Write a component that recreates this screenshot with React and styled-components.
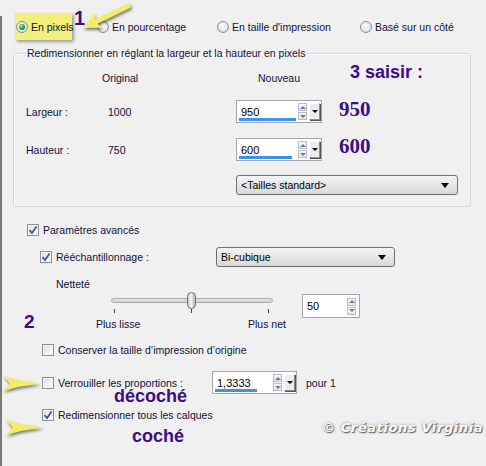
import React from 'react';
import styled, { createGlobalStyle } from 'styled-components';

const GlobalStyle = createGlobalStyle`
  body {
    margin: 0;
    background: #f0f0f0;
  }
`;

const Page = styled.div`
  position: relative;
  width: 486px;
  height: 466px;
  overflow: hidden;
  background: #f0f0f0;
  font-family: "Liberation Sans", Arial, sans-serif;
  font-size: 10.5px;
  color: #10103a;
  padding-top: 13px;
  box-sizing: border-box;
  white-space: nowrap;

  &::before {
    content: '';
    position: absolute;
    left: 0;
    top: 16px;
    bottom: 0;
    width: 2px;
    background: #7a7a7a;
  }
`;

const RadioRow = styled.div`
  display: flex;
  align-items: center;
  height: 27px;
  padding-left: 15px;
`;

const Highlight = styled.div`
  display: flex;
  align-items: center;
  gap: 3px;
  width: 57px;
  height: 27px;
  padding-left: 1px;
  box-sizing: border-box;
  background: #f3ef7c;
  box-shadow: 2px 2px 3px rgba(0, 0, 0, 0.35);
  margin-right: 25px;
`;

const RadioItem = styled.label`
  display: flex;
  align-items: center;
  gap: 3px;
  width: ${(p) => (p.$w ? `${p.$w}px` : 'auto')};
`;

const RadioDot = styled.span`
  width: 12px;
  height: 12px;
  border-radius: 50%;
  box-sizing: border-box;
  border: 1px solid #8a8f96;
  background: radial-gradient(circle at 45% 40%, #ffffff 0%, #e4e6e9 60%, #c9ccd1 100%);
  display: flex;
  align-items: center;
  justify-content: center;
  flex-shrink: 0;

  &::after {
    content: '';
    display: ${(p) => (p.$on ? 'block' : 'none')};
    width: 6px;
    height: 6px;
    border-radius: 50%;
    background: radial-gradient(circle at 40% 35%, #9ff0a8 0%, #1c9b3a 55%, #0b5a20 100%);
  }
`;

const Group = styled.fieldset`
  margin: 7px 0 0 13px;
  width: 458px;
  box-sizing: border-box;
  padding: 0 0 11px 12px;
  border: 1px solid #d6d9dc;
  border-radius: 3px;
  box-shadow: inset 1px 1px 0 #ffffff;
`;

const Legend = styled.legend`
  padding: 0 1px;
  line-height: 12px;
`;

const HeadRow = styled.div`
  display: grid;
  grid-template-columns: 82px 128px 86px;
  height: 16px;
  align-items: center;
  margin-top: 11px;
`;

const HeadCell = styled.span`
  grid-column: ${(p) => p.$col};
  text-align: ${(p) => (p.$center ? 'center' : 'left')};
  margin-left: ${(p) => (p.$shift ? `${p.$shift}px` : '0')};
`;

const Grid = styled.div`
  display: grid;
  grid-template-columns: 82px 128px 86px;
  grid-auto-rows: 23px;
  row-gap: 15px;
  align-items: center;
  margin-top: 14px;
`;

const SelectBox = styled.div`
  display: flex;
  align-items: center;
  justify-content: space-between;
  width: ${(p) => p.$w}px;
  height: 20px;
  box-sizing: border-box;
  padding: 0 8px 0 4px;
  border: 1px solid #707070;
  border-radius: 3px;
  background: linear-gradient(#f4f4f4, #e6e6e6 50%, #d8d8d8);
  color: #000;
  margin-left: ${(p) => (p.$ml ? `${p.$ml}px` : '0')};
  margin-top: ${(p) => (p.$mt ? `${p.$mt}px` : '0')};
`;

const Caret = styled.span`
  width: 0;
  height: 0;
  border-left: 4px solid transparent;
  border-right: 4px solid transparent;
  border-top: 5px solid #000;
`;

const SpinOuter = styled.div`
  display: flex;
  align-items: center;
  width: ${(p) => p.$w}px;
  height: ${(p) => p.$h || 23}px;
  box-sizing: border-box;
  border: 1px solid #a3a6ab;
  background: #fff;
  padding-right: 1px;
  color: #000;
  flex-shrink: 0;
`;

const SpinValue = styled.span`
  position: relative;
  flex: 1;
  align-self: stretch;
  display: flex;
  align-items: center;
  padding-left: 4px;
  font-size: 11px;

  &::after {
    content: '';
    display: ${(p) => (p.$bar ? 'block' : 'none')};
    position: absolute;
    left: 2px;
    bottom: 1px;
    width: ${(p) => p.$bar}px;
    height: 3px;
    background: #3b93ea;
  }
`;

const SpinArrows = styled.span`
  display: flex;
  flex-direction: column;
  gap: 1px;
  margin-right: 2px;
`;

const SpinBtn = styled.span`
  width: 9px;
  height: 8px;
  box-sizing: border-box;
  border: 1px solid #b9bcc2;
  background: linear-gradient(#fafafa, #e3e5e8);
  display: flex;
  align-items: center;
  justify-content: center;

  &::after {
    content: '';
    border-left: 3px solid transparent;
    border-right: 3px solid transparent;
    ${(p) => (p.$down ? 'border-top: 3px solid #5d7fbf;' : 'border-bottom: 3px solid #5d7fbf;')}
  }
`;

const DropBtn = styled.span`
  width: 11px;
  height: 17px;
  box-sizing: border-box;
  border: 1px solid #8c8c8c;
  border-top-color: #fff;
  border-left-color: #fff;
  box-shadow: 1px 1px 0 #555;
  background: #ececec;
  display: flex;
  align-items: center;
  justify-content: center;

  &::after {
    content: '';
    border-left: 3px solid transparent;
    border-right: 3px solid transparent;
    border-top: 3px solid #000;
  }
`;

const Lower = styled.div`
  display: flex;
  flex-direction: column;
`;

const Row = styled.div`
  display: flex;
  align-items: center;
  padding-left: ${(p) => p.$pl}px;
  margin-top: ${(p) => p.$mt}px;
  height: ${(p) => p.$h || 13}px;
`;

const CheckLabel = styled.label`
  display: flex;
  align-items: center;
  gap: 4px;
  width: ${(p) => (p.$w ? `${p.$w}px` : 'auto')};
  flex-shrink: 0;
`;

const Box = styled.span`
  width: 12px;
  height: 12px;
  box-sizing: border-box;
  border: 1px solid #8e8f91;
  background: linear-gradient(135deg, #d9dadc, #f6f6f6 70%);
  box-shadow: inset 0 0 0 1px #f4f4f4;
  display: flex;
  align-items: center;
  justify-content: center;
  flex-shrink: 0;
`;

const SliderRow = styled.div`
  display: flex;
  align-items: flex-start;
  margin-top: 2px;
  padding-left: 96px;
`;

const SliderBlock = styled.div`
  position: relative;
  width: 194px;
  height: 38px;
`;

const SpinSlot = styled.div`
  margin: 2px 0 0 12px;
`;

const Track = styled.div`
  position: absolute;
  left: 15px;
  top: 6px;
  width: 162px;
  height: 5px;
  box-sizing: border-box;
  border: 1px solid #a9a9a9;
  border-radius: 3px;
  background: linear-gradient(#e7e7e7, #cfcfcf);
`;

const Thumb = styled.div`
  position: absolute;
  left: 91px;
  top: 0;
  width: 9px;
  height: 17px;
  box-sizing: border-box;
  border: 1px solid #6f7277;
  border-radius: 5px;
  background: linear-gradient(90deg, #c9ccd3, #f4f5f7 45%, #aab0bb);
`;

const Tick = styled.span`
  position: absolute;
  top: 17px;
  left: ${(p) => p.$x}px;
  width: 1px;
  height: 4px;
  background: #444;
`;

const TickLabel = styled.span`
  position: absolute;
  top: 26px;
  left: ${(p) => p.$x}px;
  line-height: 13px;
`;

const Trail = styled.span`
  margin-left: 9px;
`;

const Note = styled.span`
  position: absolute;
  left: ${(p) => p.$x}px;
  top: ${(p) => p.$y}px;
  color: #3d0c86;
  font-family: ${(p) => (p.$serif ? '"Liberation Serif", "Times New Roman", serif' : '"Liberation Sans", Arial, sans-serif')};
  font-weight: bold;
  font-size: ${(p) => p.$size}px;
  line-height: 1;
`;

const Watermark = styled.span`
  position: absolute;
  left: 322px;
  top: 420px;
  color: #fafafa;
  font-family: "DejaVu Sans", sans-serif;
  font-weight: bold;
  font-style: italic;
  font-size: 13px;
  letter-spacing: 0.6px;
  text-shadow: 1px 1px 1px #606060, 0 0 3px #8a8a8a;
`;

const ArrowSvg = styled.svg`
  position: absolute;
  left: ${(p) => p.$x}px;
  top: ${(p) => p.$y}px;
  overflow: visible;
  filter: drop-shadow(1px 2px 1.5px rgba(0, 0, 0, 0.5));
`;

const Radio = ({ on, children, w }) => (
  <RadioItem $w={w}>
    <RadioDot $on={on} />
    <span>{children}</span>
  </RadioItem>
);

const Check = ({ on, children, w }) => (
  <CheckLabel $w={w}>
    <Box>
      {on && (
        <svg width="10" height="10" viewBox="0 0 10 10">
          <path d="M1.5 5.2 L4 8 L8.6 1.4" fill="none" stroke="#3f56a0" strokeWidth="1.8" />
        </svg>
      )}
    </Box>
    <span>{children}</span>
  </CheckLabel>
);

const Spin = ({ value, w, h, bar, drop = true }) => (
  <SpinOuter $w={w} $h={h}>
    <SpinValue $bar={bar}>{value}</SpinValue>
    <SpinArrows>
      <SpinBtn />
      <SpinBtn $down />
    </SpinArrows>
    {drop && <DropBtn />}
  </SpinOuter>
);

const Dart = ({ x, y }) => (
  <ArrowSvg $x={x} $y={y} width="38" height="17" viewBox="0 0 38 17">
    <polygon points="0,1 15,5 37,8.5 15,12 0,16 7,8.5" fill="#f2ee66" />
  </ArrowSvg>
);

export default function App() {
  return (
    <Page>
      <GlobalStyle />
      <RadioRow>
        <Highlight>
          <RadioDot $on />
          <span>En pixels</span>
        </Highlight>
        <Radio w={120}>En pourcentage</Radio>
        <Radio w={143}>En taille d'impression</Radio>
        <Radio>Basé sur un côté</Radio>
      </RadioRow>

      <Group>
        <Legend>Redimensionner en réglant la largeur et la hauteur en pixels</Legend>
        <HeadRow>
          <HeadCell $col={2} $shift={-6}>Original</HeadCell>
          <HeadCell $col={3} $center>Nouveau</HeadCell>
        </HeadRow>
        <Grid>
          <span>Largeur :</span>
          <span>1000</span>
          <Spin value="950" w={86} bar={57} />
          <span>Hauteur :</span>
          <span>750</span>
          <Spin value="600" w={86} bar={53} />
        </Grid>
        <SelectBox $w={222} $ml={210} $mt={14}>
          <span>&lt;Tailles standard&gt;</span>
          <Caret />
        </SelectBox>
      </Group>

      <Lower>
        <Row $pl={27} $mt={16}>
          <Check on>Paramètres avancés</Check>
        </Row>
        <Row $pl={40} $mt={11} $h={20}>
          <Check on w={176}>Rééchantillonnage :</Check>
          <SelectBox $w={179}>
            <span>Bi-cubique</span>
            <Caret />
          </SelectBox>
        </Row>
        <Row $pl={56} $mt={10}>
          <span>Netteté</span>
        </Row>
        <SliderRow>
          <SliderBlock>
            <Track />
            <Thumb />
            <Tick $x={18} />
            <Tick $x={95} />
            <Tick $x={172} />
            <TickLabel $x={0}>Plus lisse</TickLabel>
            <TickLabel $x={152}>Plus net</TickLabel>
          </SliderBlock>
          <SpinSlot>
            <Spin value="50" w={58} h={24} drop={false} />
          </SpinSlot>
        </SliderRow>
        <Row $pl={42} $mt={13}>
          <Check>Conserver la taille d’impression d’origine</Check>
        </Row>
        <Row $pl={42} $mt={15} $h={23}>
          <Check w={170}>Verrouiller les proportions :</Check>
          <Spin value="1,3333" w={85} bar={42} />
          <Trail>pour 1</Trail>
        </Row>
        <Row $pl={42} $mt={14}>
          <Check on>Redimensionner tous les calques</Check>
        </Row>
      </Lower>

      <Note $x={74} $y={8} $size={20}>1</Note>
      <ArrowSvg $x={78} $y={0} width="60" height="36" viewBox="0 0 60 36">
        <g transform="translate(5,28) rotate(-26)">
          <polygon points="0,0 17,-8 15,-2.5 52,-2.5 53,0 52,2.5 15,2.5 17,8" fill="#f2ee66" />
        </g>
      </ArrowSvg>
      <Note $x={350} $y={63} $size={18}>3 saisir :</Note>
      <Note $x={339} $y={99} $size={21} $serif>950</Note>
      <Note $x={339} $y={136} $size={21} $serif>600</Note>
      <Note $x={24} $y={312} $size={19}>2</Note>
      <Dart x={3} y={375} />
      <Note $x={114} $y={387} $size={18}>décoché</Note>
      <Dart x={6} y={419} />
      <Note $x={132} $y={427} $size={18}>coché</Note>
      <Watermark>© Créations Virginia</Watermark>
    </Page>
  );
}
